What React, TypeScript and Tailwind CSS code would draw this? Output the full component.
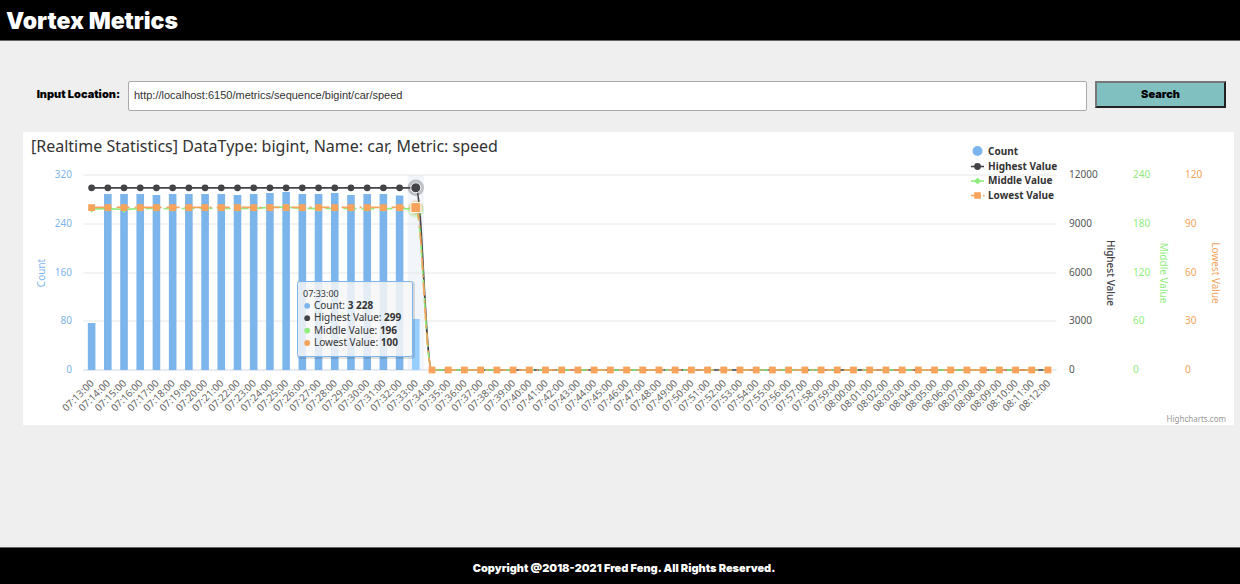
import React, { useState } from "react";

const STEP = 16.21;
const LEFT = 60.5;
const RIGHT = 1033.6;
const BASE = 238;
const TICKS = [43, 92, 141, 189, 238];

const BAR_TOPS = [
  191, 62, 62, 62, 63, 62, 62, 62, 62, 63, 62, 61, 60, 62, 62, 61, 63, 62, 62, 63.5, 187,
];

const pointX = (i: number) => LEFT + STEP * (i + 0.5);

const TIMES = Array.from({ length: 60 }, (_, i) => {
  const minutes = 7 * 60 + 13 + i;
  const pad = (n: number) => String(n).padStart(2, "0");
  return `${pad(Math.floor(minutes / 60))}:${pad(minutes % 60)}:00`;
});

const ACTIVE = 20;
const MIDDLE_Y = [
  77.2, 76.6, 77.6, 76.4, 76.4, 76.6, 76.4, 76.2, 76.4, 76.6, 76.4, 75.4, 75, 76.4, 76.6, 76.4, 76.6, 76.6, 76.6, 76.6, 77,
];

function seriesPath(levels: number[]) {
  const head = levels.map((y, i) => `${i ? "L" : "M"}${pointX(i).toFixed(1)} ${y}`).join(" ");
  const x = pointX(ACTIVE);
  const last = levels[levels.length - 1];
  return `${head} C${x + 6.5} ${last} ${x + 9.5} ${BASE} ${x + STEP} ${BASE} L${pointX(59)} ${BASE}`;
}

const flat = (y: number) => Array.from({ length: ACTIVE + 1 }, () => y);

const AXES = [
  { title: "Highest Value", weight: "font-medium", color: "#434348", labelColor: "#555555", x: 1046, titleX: 1084, labels: ["12000", "9000", "6000", "3000", "0"] },
  { title: "Middle Value", weight: "font-normal", color: "#90ed7d", labelColor: "#90ed7d", x: 1110, titleX: 1137, labels: ["240", "180", "120", "60", "0"] },
  { title: "Lowest Value", weight: "font-normal", color: "#f7a35c", labelColor: "#f7a35c", x: 1162, titleX: 1189, labels: ["120", "90", "60", "30", "0"] },
];

const TOOLTIP = [
  { name: "Count", value: "3 228", color: "#7cb5ec" },
  { name: "Highest Value", value: "299", color: "#434348" },
  { name: "Middle Value", value: "196", color: "#90ed7d" },
  { name: "Lowest Value", value: "100", color: "#f7a35c" },
];

function Legend() {
  return (
    <g className="text-[10px] font-bold" fill="#333333">
      <circle cx="954.5" cy="19" r="5" fill="#7cb5ec" />
      <path d="M948 34.5h13" stroke="#434348" strokeWidth="1.6" />
      <circle cx="954.5" cy="34.5" r="3.4" fill="#434348" />
      <path d="M948 49h13" stroke="#90ed7d" strokeWidth="1.6" />
      <path d="M954.5 45.6l3.4 3.4l-3.4 3.4l-3.4-3.4z" fill="#90ed7d" />
      <path d="M948 63.5h10m2 0h1.6" stroke="#f7a35c" strokeWidth="1.6" />
      <path d="M951.2 60.2h6.6v6.6h-6.6z" fill="#f7a35c" />
      <text x="965" y="23">Count</text>
      <text x="965" y="38">Highest Value</text>
      <text x="965" y="52">Middle Value</text>
      <text x="965" y="67">Lowest Value</text>
    </g>
  );
}

function Tooltip() {
  return (
    <g>
      <rect x="275.5" y="150.5" width="115" height="75" rx="2" fill="none" stroke="#000" strokeOpacity="0.12" strokeWidth="3" />
      <rect x="274.5" y="149.5" width="115" height="75" rx="2" fill="#f7f7f7" fillOpacity="0.85" stroke="#7cb5ec" />
      <text x="280" y="165" className="text-[9px]" fill="#333333">07:33:00</text>
      {TOOLTIP.map((row, i) => (
        <g key={row.name}>
          <circle cx="284.2" cy={173.8 + i * 12.4} r="2.9" fill={row.color} />
          <text x="291" y={177 + i * 12.4} className="text-[10px]" fill="#333333">
            {row.name}: <tspan className="font-bold">{row.value}</tspan>
          </text>
        </g>
      ))}
    </g>
  );
}

function Chart() {
  const ax = pointX(ACTIVE);
  return (
    <svg
      viewBox="0 0 1211 293"
      role="img"
      aria-label="Realtime statistics"
      className="block h-auto w-full bg-white font-['Lucida_Grande','Lucida_Sans_Unicode','Noto_Sans',sans-serif]"
    >
      <rect x={ax - STEP / 2} y="43" width={STEP} height="195" fill="#ccd6eb" fillOpacity="0.25" />
      {TICKS.map((y) => (
        <path key={y} d={`M${LEFT} ${y}H${RIGHT}`} stroke={y === BASE ? "#ccd6eb" : "#e6e6e6"} />
      ))}
      <text x="8" y="20" className="text-[16px]" fill="#333333">
        [Realtime Statistics] DataType: bigint, Name: car, Metric: speed
      </text>

      {BAR_TOPS.map((top, i) => (
        <rect key={i} x={pointX(i) - 3.8} y={top} width="7.6" height={BASE - top} fill={i === ACTIVE ? "#96cfff" : "#7cb5ec"} />
      ))}

      <path d={seriesPath(flat(55.8))} fill="none" stroke="#434348" strokeWidth="1.7" />
      {TIMES.slice(0, ACTIVE).map((time, i) => (
        <circle key={time} cx={pointX(i)} cy="55.8" r="3.4" fill="#434348" />
      ))}
      <circle cx={ax} cy="55.8" r="8.2" fill="#434348" fillOpacity="0.3" />
      <circle cx={ax} cy="55.8" r="5" fill="#434348" stroke="#fff" />

      <path d={seriesPath(MIDDLE_Y)} fill="none" stroke="#90ed7d" strokeWidth="1.7" strokeDasharray="13 5" />
      {MIDDLE_Y.slice(0, ACTIVE).map((y, i) => (
        <path key={i} d={`M${pointX(i)} ${y - 3.4}l3.4 3.4l-3.4 3.4l-3.4-3.4z`} fill="#90ed7d" />
      ))}
      <circle cx={ax} cy="77.5" r="8.2" fill="#90ed7d" fillOpacity="0.35" />
      <path d={`M${ax} 72.5l5 5l-5 5l-5-5z`} fill="#90ed7d" />

      <path d={seriesPath(flat(75.4))} fill="none" stroke="#f7a35c" strokeWidth="1.7" strokeDasharray="13 5 2 5" />
      <circle cx={ax} cy="75.6" r="7.6" fill="#f7a35c" fillOpacity="0.25" />
      {TIMES.map((time, i) =>
        i === ACTIVE ? (
          <rect key={time} x={ax - 5} y="70.6" width="10" height="10" fill="#f7a35c" stroke="#fff" />
        ) : (
          <rect key={time} x={pointX(i) - 3.4} y={(i < ACTIVE ? 75.6 : BASE) - 3.4} width="6.8" height="6.8" fill="#f7a35c" />
        ),
      )}

      <g className="text-[10px]" fill="#666666">
        {TIMES.map((time, i) => (
          <text key={time} textAnchor="end" transform={`translate(${pointX(i) + 3} 252) rotate(-45)`}>
            {time}
          </text>
        ))}
      </g>

      <g className="text-[10px]" fill="#7cb5ec">
        {["320", "240", "160", "80", "0"].map((label, i) => (
          <text key={label} x="49" y={TICKS[i] + 3} textAnchor="end">{label}</text>
        ))}
        <text textAnchor="middle" transform="translate(22 141) rotate(-90)">Count</text>
      </g>
      {AXES.map((axis) => (
        <g key={axis.title} className="text-[10px]">
          {axis.labels.map((label, i) => (
            <text key={label} x={axis.x} y={TICKS[i] + 3} fill={axis.labelColor}>{label}</text>
          ))}
          <text textAnchor="middle" className={axis.weight} fill={axis.color} transform={`translate(${axis.titleX} 141) rotate(90)`}>
            {axis.title}
          </text>
        </g>
      ))}

      <Legend />
      <Tooltip />
      <text x="1203" y="290" textAnchor="end" className="text-[8px]" fill="#999999">Highcharts.com</text>
    </svg>
  );
}

export default function App() {
  const [location, setLocation] = useState("http://localhost:6150/metrics/sequence/bigint/car/speed");
  return (
    <div className="flex min-h-screen flex-col bg-[#efefef] font-['Arial_Black','Inter',sans-serif] text-black">
      <header className="flex h-[41px] items-center border-b border-[#666] bg-black px-1.5 pt-0.5">
        <h1 className="text-[23px] font-black text-white">Vortex Metrics</h1>
      </header>
      <main className="flex-1 pt-10">
        <form className="flex items-start pr-3.5 pl-8" onSubmit={(e) => e.preventDefault()}>
          <label htmlFor="location" className="w-24 pt-1 pr-2 text-right text-[11px] leading-[18px] font-black whitespace-nowrap">
            Input Location:
          </label>
          <input
            id="location"
            type="text"
            value={location}
            onChange={(e) => setLocation(e.target.value)}
            className="h-[30px] min-w-0 flex-1 rounded-xs border border-[#aaa] bg-white px-[5px] pb-0.5 font-['Liberation_Sans',sans-serif] text-[11px] text-[#333]"
          />
          <button
            type="submit"
            className="ml-2 h-[27px] w-[131px] border-2 border-t-[#777] border-r-[#222] border-b-[#222] border-l-[#777] bg-[#81c0c0] text-[11px] font-black"
          >
            Search
          </button>
        </form>
        <section className="mt-5 mr-1.5 ml-[23px] pt-px">
          <Chart />
        </section>
      </main>
      <footer className="flex h-[37px] items-center justify-center border-t border-[#666] bg-black pt-1 pl-2">
        <p className="text-[11px] font-black text-white">Copyright @2018-2021 Fred Feng. All Rights Reserved.</p>
      </footer>
    </div>
  );
}
